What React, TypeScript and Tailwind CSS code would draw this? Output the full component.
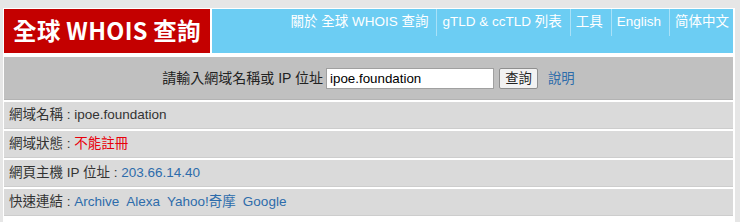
export default function App() {
    const navItems = ["關於 全球 WHOIS 查詢", "gTLD & ccTLD 列表", "工具", "English", "简体中文"];
    const font = "font-['Liberation_Sans','Noto_Sans_CJK_TC',sans-serif]";
    const row = "flex h-[27px] items-center bg-[#dadada] pl-[5px] shadow-[inset_0_-1px_0_#cdcdcd]";

    return (
        <div className={`min-h-[222px] bg-[#e6e6e6] pl-[3px] pr-[5px] pt-[8px] ${font} text-[13.5px] text-[#333]`}>
            <div className="bg-white pb-[9px] pl-px pr-[2px] pt-px">
                <header className="flex h-[44px] gap-[2px]">
                    <div className="flex w-[206px] items-center justify-center bg-[#c40000] pb-px">
                        <span className="font-['Noto_Sans_CJK_TC',sans-serif] text-[23.5px] font-bold leading-none tracking-[0.3px] text-white">
                            全球 WHOIS 查詢
                        </span>
                    </div>
                    <nav className="flex flex-1 items-start justify-end bg-[#6ccdf3]">
                        {navItems.map((item, i) => (
                            <a
                                key={item}
                                className={`flex h-[27px] items-center pl-[5px] pr-[8px] text-white last:pr-[4px] ${i > 0 ? "border-l border-[#a8e1f8]" : ""}`}
                            >
                                {item}
                            </a>
                        ))}
                    </nav>
                </header>
                <div className="mt-[4px] flex h-[43px] items-center justify-center bg-[#c0c0c0] shadow-[inset_0_-1px_0_#b3b3b3]">
                    <span className="text-[14px] text-[#222]">請輸入網域名稱或 IP 位址</span>
                    <input
                        defaultValue="ipoe.foundation"
                        className="ml-[3px] h-[21px] w-[168px] border border-[#a0a0a0] bg-white px-[3px] text-[13.33px] text-black outline-none"
                    />
                    <button className="ml-[5px] h-[21px] w-[39px] rounded-[2px] border border-[#8f8f8f] bg-[#f2f2f2] text-[13.33px] text-[#222]">
                        查詢
                    </button>
                    <a className="ml-[10px] text-[13.33px] text-[#2d6cab]">說明</a>
                </div>
                <div className="mt-[2px] flex flex-col gap-[2px]">
                    <div className={row}>網域名稱 : ipoe.foundation</div>
                    <div className={row}>
                        網域狀態 :&nbsp;<span className="text-[#e8000b]">不能註冊</span>
                    </div>
                    <div className={row}>
                        網頁主機 IP 位址 :&nbsp;<a className="text-[#2d6cab]">203.66.14.40</a>
                    </div>
                    <div className={row}>
                        快速連結 :&nbsp;
                        <span className="flex gap-[7px] text-[#2d6cab]">
                            <a>Archive</a>
                            <a>Alexa</a>
                            <a>Yahoo!奇摩</a>
                            <a>Google</a>
                        </span>
                    </div>
                </div>
            </div>
        </div>
    );
}
